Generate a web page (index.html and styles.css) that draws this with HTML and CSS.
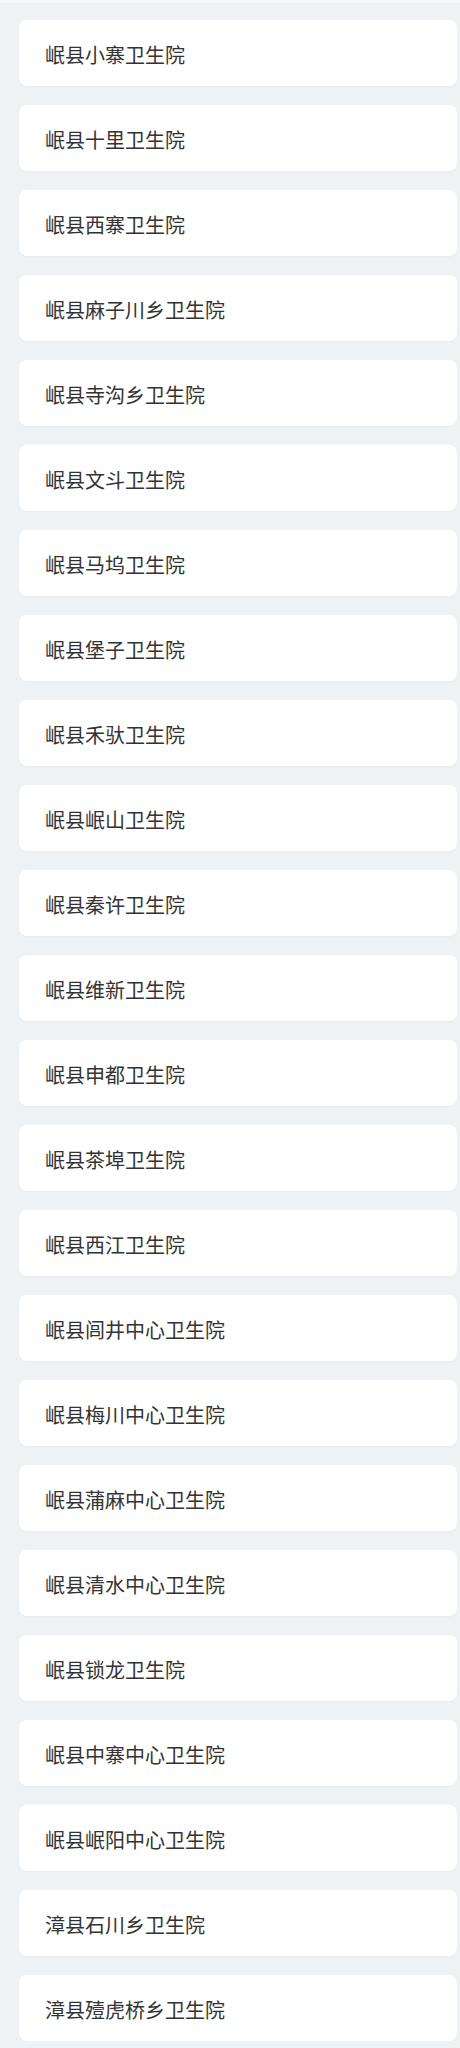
FILE: index.html
```html
<!DOCTYPE html>
<html lang="zh">
<head>
<meta charset="utf-8">
<link rel="stylesheet" href="styles.css">
</head>
<body>
<div class="topbar"></div>
<ul class="list">
<li class="card">岷县小寨卫生院</li>
<li class="card">岷县十里卫生院</li>
<li class="card">岷县西寨卫生院</li>
<li class="card">岷县麻子川乡卫生院</li>
<li class="card">岷县寺沟乡卫生院</li>
<li class="card">岷县文斗卫生院</li>
<li class="card">岷县马坞卫生院</li>
<li class="card">岷县堡子卫生院</li>
<li class="card">岷县禾驮卫生院</li>
<li class="card">岷县岷山卫生院</li>
<li class="card">岷县秦许卫生院</li>
<li class="card">岷县维新卫生院</li>
<li class="card">岷县申都卫生院</li>
<li class="card">岷县茶埠卫生院</li>
<li class="card">岷县西江卫生院</li>
<li class="card">岷县闾井中心卫生院</li>
<li class="card">岷县梅川中心卫生院</li>
<li class="card">岷县蒲麻中心卫生院</li>
<li class="card">岷县清水中心卫生院</li>
<li class="card">岷县锁龙卫生院</li>
<li class="card">岷县中寨中心卫生院</li>
<li class="card">岷县岷阳中心卫生院</li>
<li class="card">漳县石川乡卫生院</li>
<li class="card">漳县殪虎桥乡卫生院</li>
</ul>
</body>
</html>
```

FILE: styles.css
```css
html, body {
  margin: 0;
  padding: 0;
  background: #eef2f5;
}
body {
  font-family: "Noto Sans CJK SC", "Noto Sans", sans-serif;
  color: #333;
}
.topbar {
  height: 3px;
  background: #f6f8fa;
}
.list {
  list-style: none;
  margin: 0;
  padding: 17px 3px 0 19px;
  display: flex;
  flex-direction: column;
  gap: 19px;
}
.card {
  background: #fff;
  border-radius: 8px;
  height: 66px;
  box-sizing: border-box;
  padding: 3px 26px 0;
  display: flex;
  align-items: center;
  font-size: 20px;
  line-height: 1;
  box-shadow: 0 1px 2px rgba(0, 0, 0, 0.03);
}
```
